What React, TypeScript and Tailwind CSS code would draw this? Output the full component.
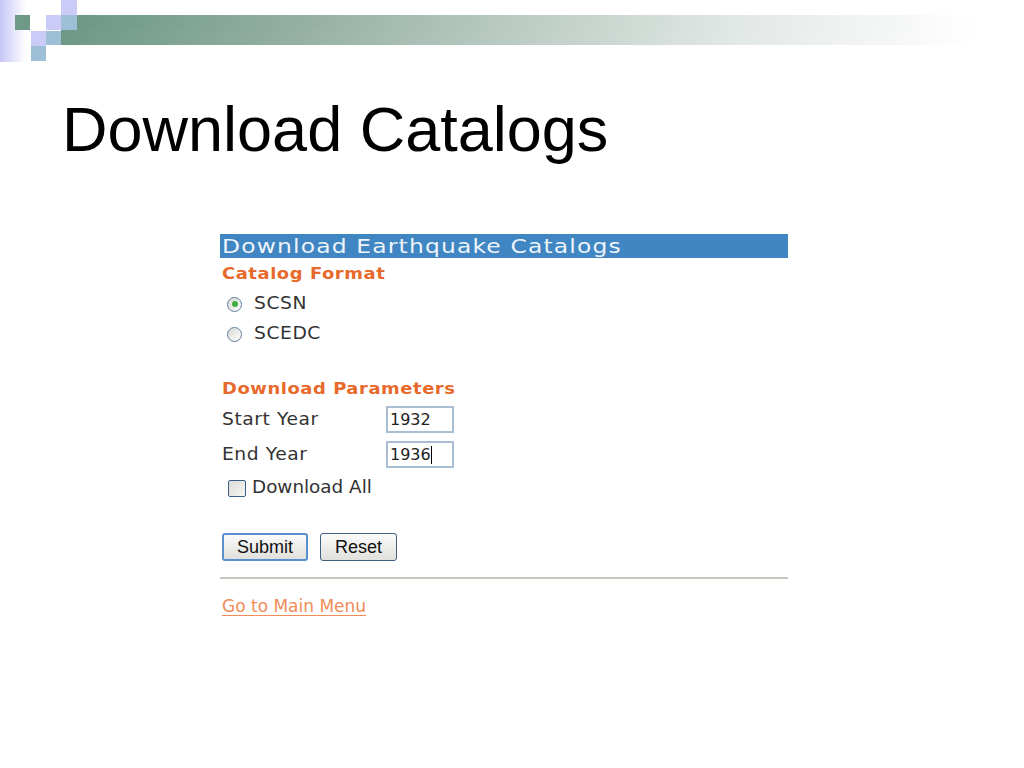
import React from "react";

const HeaderArt = () => (
  <svg width="1024" height="62" viewBox="0 0 1024 62" className="block">
    <defs>
      <linearGradient id="strip" x1="0" x2="1" y1="0" y2="0">
        <stop offset="0" stopColor="#c6c6f6" />
        <stop offset="1" stopColor="#ffffff" />
      </linearGradient>
      <linearGradient id="bar" x1="0" x2="1" y1="0" y2="0">
        <stop offset="0" stopColor="#6e9986" />
        <stop offset="0.25" stopColor="#96b1a4" />
        <stop offset="0.7" stopColor="#e2e8e5" />
        <stop offset="0.95" stopColor="#ffffff" />
      </linearGradient>
    </defs>
    <rect x="0" y="0" width="26" height="62" fill="url(#strip)" />
    <rect x="61" y="30" width="963" height="15" fill="url(#bar)" />
    <rect x="77" y="15" width="947" height="15" fill="url(#bar)" />
    <rect x="15" y="15" width="15" height="15" fill="#6e9986" />
    <rect x="46" y="15" width="15" height="15" fill="#cbcbf7" />
    <rect x="61" y="0" width="16" height="15" fill="#cbcbf7" />
    <rect x="61" y="15" width="16" height="15" fill="#9fbfd6" />
    <rect x="31" y="31" width="15" height="15" fill="#cbcbf7" />
    <rect x="46" y="31" width="15" height="14" fill="#9fbfd6" />
    <rect x="31" y="46" width="15" height="15" fill="#9fbfd6" />
  </svg>
);

// the form text in the screenshot is stretched sideways, so it gets a scale-x
const Wide = ({ children, className = "" }: { children: React.ReactNode; className?: string }) => (
  <span className={`inline-block origin-left whitespace-nowrap ${className}`}>{children}</span>
);

const Radio = ({ checked, label }: { checked?: boolean; label: string }) => (
  <div className="flex items-center h-[24px]">
    <span className="ml-[7px] w-[15px] h-[15px] rounded-full border border-[#5f7f9e] bg-gradient-to-br from-[#d8d8d2] to-white flex items-center justify-center">
      {checked && <span className="w-[6px] h-[6px] rounded-full bg-[#3fae3f]" />}
    </span>
    <Wide className="ml-[12px] text-[17px] tracking-[0.5px] scale-x-[1.1] text-[#333]">{label}</Wide>
  </div>
);

const YearRow = ({ label, value, caret }: { label: string; value: string; caret?: boolean }) => (
  <div className="flex items-center h-[27px]">
    <div className="w-[164px]">
      <Wide className="text-[17px] tracking-[0.5px] scale-x-[1.1] text-[#333]">{label}</Wide>
    </div>
    <div className="w-[68px] h-[27px] border-2 border-[#a9bdd3] bg-white flex items-center pl-[2px] text-[16px] text-[#222]">
      {value}
      {caret && <span className="w-px h-[18px] bg-black" />}
    </div>
  </div>
);

export default function App() {
  return (
    <div
      className="w-[1024px] h-[768px] bg-white overflow-hidden"
      style={{ fontFamily: '"DejaVu Sans", Verdana, sans-serif' }}
    >
      <HeaderArt />
      <h1
        className="mt-[36px] pl-[62px] h-[62px] text-[63px] leading-[62px] text-black"
        style={{ fontFamily: '"Liberation Sans", Arial, sans-serif' }}
      >
        Download Catalogs
      </h1>

      <div className="mt-[74px] ml-[220px] w-[568px] flex flex-col">
        <div className="h-[24px] bg-[#3f86c2] pl-[2px] leading-[24px] overflow-hidden">
          <Wide className="text-[20px] tracking-[1px] scale-x-[1.17] text-[#eef4fa]">Download Earthquake Catalogs</Wide>
        </div>

        <div className="mt-[4px] h-[24px] flex items-center pl-[2px]">
          <Wide className="text-[16px] font-bold tracking-[0.5px] scale-x-[1.12] text-[#e8692c]">Catalog Format</Wide>
        </div>
        <div className="mt-[6px]">
          <Radio checked label="SCSN" />
        </div>
        <div className="mt-[6px]">
          <Radio label="SCEDC" />
        </div>

        <div className="mt-[31px] h-[24px] flex items-center pl-[2px]">
          <Wide className="text-[16px] font-bold tracking-[0.5px] scale-x-[1.12] text-[#e8692c]">Download Parameters</Wide>
        </div>
        <div className="mt-[5px] pl-[2px]">
          <YearRow label="Start Year" value="1932" />
        </div>
        <div className="mt-[8px] pl-[2px]">
          <YearRow label="End Year" value="1936" caret />
        </div>

        <div className="mt-[8px] h-[24px] flex items-center">
          <span className="ml-[8px] w-[18px] h-[17px] rounded-[2px] border border-[#3a5f86] bg-gradient-to-br from-[#dcdcd6] to-[#f6f6f4]" />
          <Wide className="ml-[6px] text-[17px] scale-x-[1.08] text-[#333]">Download All</Wide>
        </div>

        <div
          className="mt-[33px] flex gap-[12px] pl-[2px]"
          style={{ fontFamily: '"Liberation Sans", Arial, sans-serif' }}
        >
          <button className="w-[86px] h-[28px] rounded-[3px] border-2 border-[#5a8fd0] bg-gradient-to-b from-[#fbfbfb] to-[#e0e0dc] text-[18px] text-[#111] leading-none">
            Submit
          </button>
          <button className="w-[77px] h-[28px] rounded-[3px] border border-[#3f5f80] bg-gradient-to-b from-[#fbfbfb] to-[#e0e0dc] text-[18px] text-[#111] leading-none">
            Reset
          </button>
        </div>

        <div className="mt-[16px] h-[2px] bg-[#c6c6be]" />

        <div className="mt-[16px] h-[24px] flex items-center pl-[2px]">
          <span className="text-[17px] text-[#f08c58] underline underline-offset-[3px]">Go to Main Menu</span>
        </div>
      </div>
    </div>
  );
}
